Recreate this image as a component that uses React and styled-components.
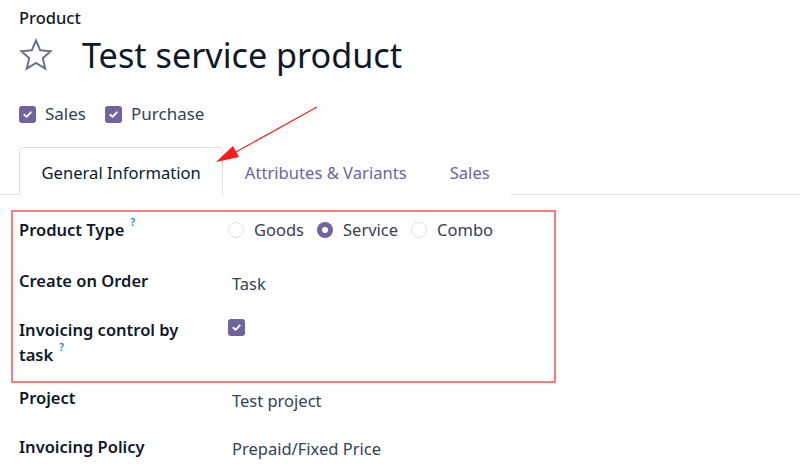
import React from "react";
import styled, { createGlobalStyle } from "styled-components";

const Global = createGlobalStyle`
  html, body { margin: 0; padding: 0; background: #fff; }
  body { font-family: "Noto Sans", "Open Sans", sans-serif; color: #212529; }
  * { box-sizing: border-box; }
`;

const Page = styled.div`
  position: relative;
  width: 800px;
  height: 475px;
  overflow: hidden;
`;

const Header = styled.div`
  padding: 6px 19px 0 19px;
`;

const Breadcrumb = styled.div`
  font-size: 16.5px;
  font-weight: 500;
  line-height: 24px;
  color: #111827;
`;

const TitleRow = styled.div`
  display: flex;
  align-items: center;
  gap: 29px;
  margin-top: 5px;
  height: 40px;
`;

const Title = styled.h1`
  margin: 0;
  font-size: 34.2px;
  font-weight: 400;
  line-height: 40px;
  color: #111827;
`;

const Options = styled.div`
  display: flex;
  gap: 19px;
  margin-top: 28px;
  align-items: center;
`;

const CheckLabel = styled.label`
  display: flex;
  align-items: center;
  gap: 9px;
  font-size: 17px;
  color: #374151;
  line-height: 22px;
`;

const Box = styled.span`
  width: 17px;
  height: 17px;
  border-radius: 3px;
  background: #71639e;
  display: inline-flex;
  align-items: center;
  justify-content: center;
  flex: none;
`;

const Tabs = styled.div`
  display: flex;
  margin-top: 22px;
  padding-left: 19px;
  border-bottom: 1px solid #dee2e6;
  height: 48px;
`;

const Tab = styled.div`
  padding: 2px ${(p) => (p.$active ? 21.5 : 20.5)}px 0;
  height: 48px;
  display: flex;
  align-items: center;
  font-size: 16.6px;
  color: ${(p) => (p.$active ? "#111827" : "#71639e")};
  background: #fff;
  border: 1px solid ${(p) => (p.$active ? "#dee2e6" : "transparent")};
  border-bottom: none;
  border-radius: 4px 4px 0 0;
  margin-bottom: -1px;
`;

const Form = styled.div`
  display: flex;
  flex-direction: column;
  padding: 22px 19px 0 19px;
`;

const Field = styled.div`
  display: grid;
  grid-template-columns: 209px 1fr;
  margin-top: ${(p) => p.$mt || 0}px;
`;

const Label = styled.div`
  font-size: 16.5px;
  font-weight: 600;
  line-height: 25px;
  color: #111827;
  width: 180px;
`;

const Help = styled.span`
  display: inline-block;
  color: #0891b2;
  font-size: 10px;
  font-weight: 600;
  margin-left: 6px;
  line-height: 10px;
  vertical-align: 10px;
`;

const Value = styled.div`
  font-size: 16.5px;
  line-height: 25px;
  height: 25px;
  color: #374151;
  padding-left: ${(p) => p.$pl || 0}px;
  padding-top: ${(p) => p.$pt || 0}px;
  display: flex;
  align-items: flex-start;
`;

const Radios = styled.div`
  display: flex;
  align-items: center;
  gap: 13px;
  height: 25px;
`;

const Radio = styled.label`
  display: flex;
  align-items: center;
  gap: 10px;
  font-size: 16.5px;
  color: #374151;
`;

const Dot = styled.span`
  width: 16px;
  height: 16px;
  border-radius: 50%;
  border: ${(p) => (p.$on ? "none" : "1px solid #dee2e6")};
  background: ${(p) => (p.$on ? "#71639e" : "#fff")};
  display: inline-flex;
  align-items: center;
  justify-content: center;
  flex: none;
  &::after {
    content: "";
    display: ${(p) => (p.$on ? "block" : "none")};
    width: 6px;
    height: 6px;
    border-radius: 50%;
    background: #fff;
  }
`;

const Highlight = styled.div`
  position: absolute;
  left: 11px;
  top: 210px;
  width: 545px;
  height: 173px;
  border: 2px solid #ff7b7b;
  pointer-events: none;
`;

const Arrow = styled.svg`
  position: absolute;
  left: 0;
  top: 0;
  pointer-events: none;
`;

const Check = () => (
  <svg width="11" height="11" viewBox="0 0 12 12">
    <path d="M2.5 6.3 L5 8.6 L9.6 3.6" fill="none" stroke="#fff" strokeWidth="2" strokeLinecap="round" strokeLinejoin="round" />
  </svg>
);

const CheckBox = () => (
  <Box>
    <Check />
  </Box>
);

const Star = () => (
  <svg width="34" height="34" viewBox="0 0 34 34">
    <path
      d="M17 2.5 L21.2 12.3 L31.8 13.2 L23.8 20.2 L26.2 30.6 L17 25 L7.8 30.6 L10.2 20.2 L2.2 13.2 L12.8 12.3 Z"
      fill="none"
      stroke="#6b7280"
      strokeWidth="2"
      strokeLinejoin="miter"
    />
  </svg>
);

export default function App() {
  return (
    <Page>
      <Global />
      <Header>
        <Breadcrumb>Product</Breadcrumb>
        <TitleRow>
          <Star />
          <Title>Test service product</Title>
        </TitleRow>
        <Options>
          <CheckLabel>
            <CheckBox />
            Sales
          </CheckLabel>
          <CheckLabel>
            <CheckBox />
            Purchase
          </CheckLabel>
        </Options>
      </Header>
      <Tabs>
        <Tab $active>General Information</Tab>
        <Tab>Attributes &amp; Variants</Tab>
        <Tab>Sales</Tab>
      </Tabs>
      <Form>
        <Field>
          <Label>
            Product Type<Help>?</Help>
          </Label>
          <Value>
            <Radios>
              <Radio>
                <Dot />
                Goods
              </Radio>
              <Radio>
                <Dot $on />
                Service
              </Radio>
              <Radio>
                <Dot />
                Combo
              </Radio>
            </Radios>
          </Value>
        </Field>

        <Field $mt={26}>
          <Label>Create on Order</Label>
          <Value $pl={4} $pt={3}>Task</Value>
        </Field>

        <Field $mt={24}>
          <Label>
            Invoicing control by task<Help>?</Help>
          </Label>
          <Value $pt={2}>
            <CheckBox />
          </Value>
        </Field>

        <Field $mt={18}>
          <Label>Project</Label>
          <Value $pl={4} $pt={3}>Test project</Value>
        </Field>

        <Field $mt={24}>
          <Label>Invoicing Policy</Label>
          <Value $pl={4} $pt={2}>Prepaid/Fixed Price</Value>
        </Field>
      </Form>
      <Highlight />
      <Arrow width="800" height="475" viewBox="0 0 800 475">
        <line x1="317" y1="107" x2="236" y2="152" stroke="#ff2020" strokeWidth="1.2" />
        <path d="M216 162 L233 146 L239 157 Z" fill="#ff1a1a" />
      </Arrow>
    </Page>
  );
}
